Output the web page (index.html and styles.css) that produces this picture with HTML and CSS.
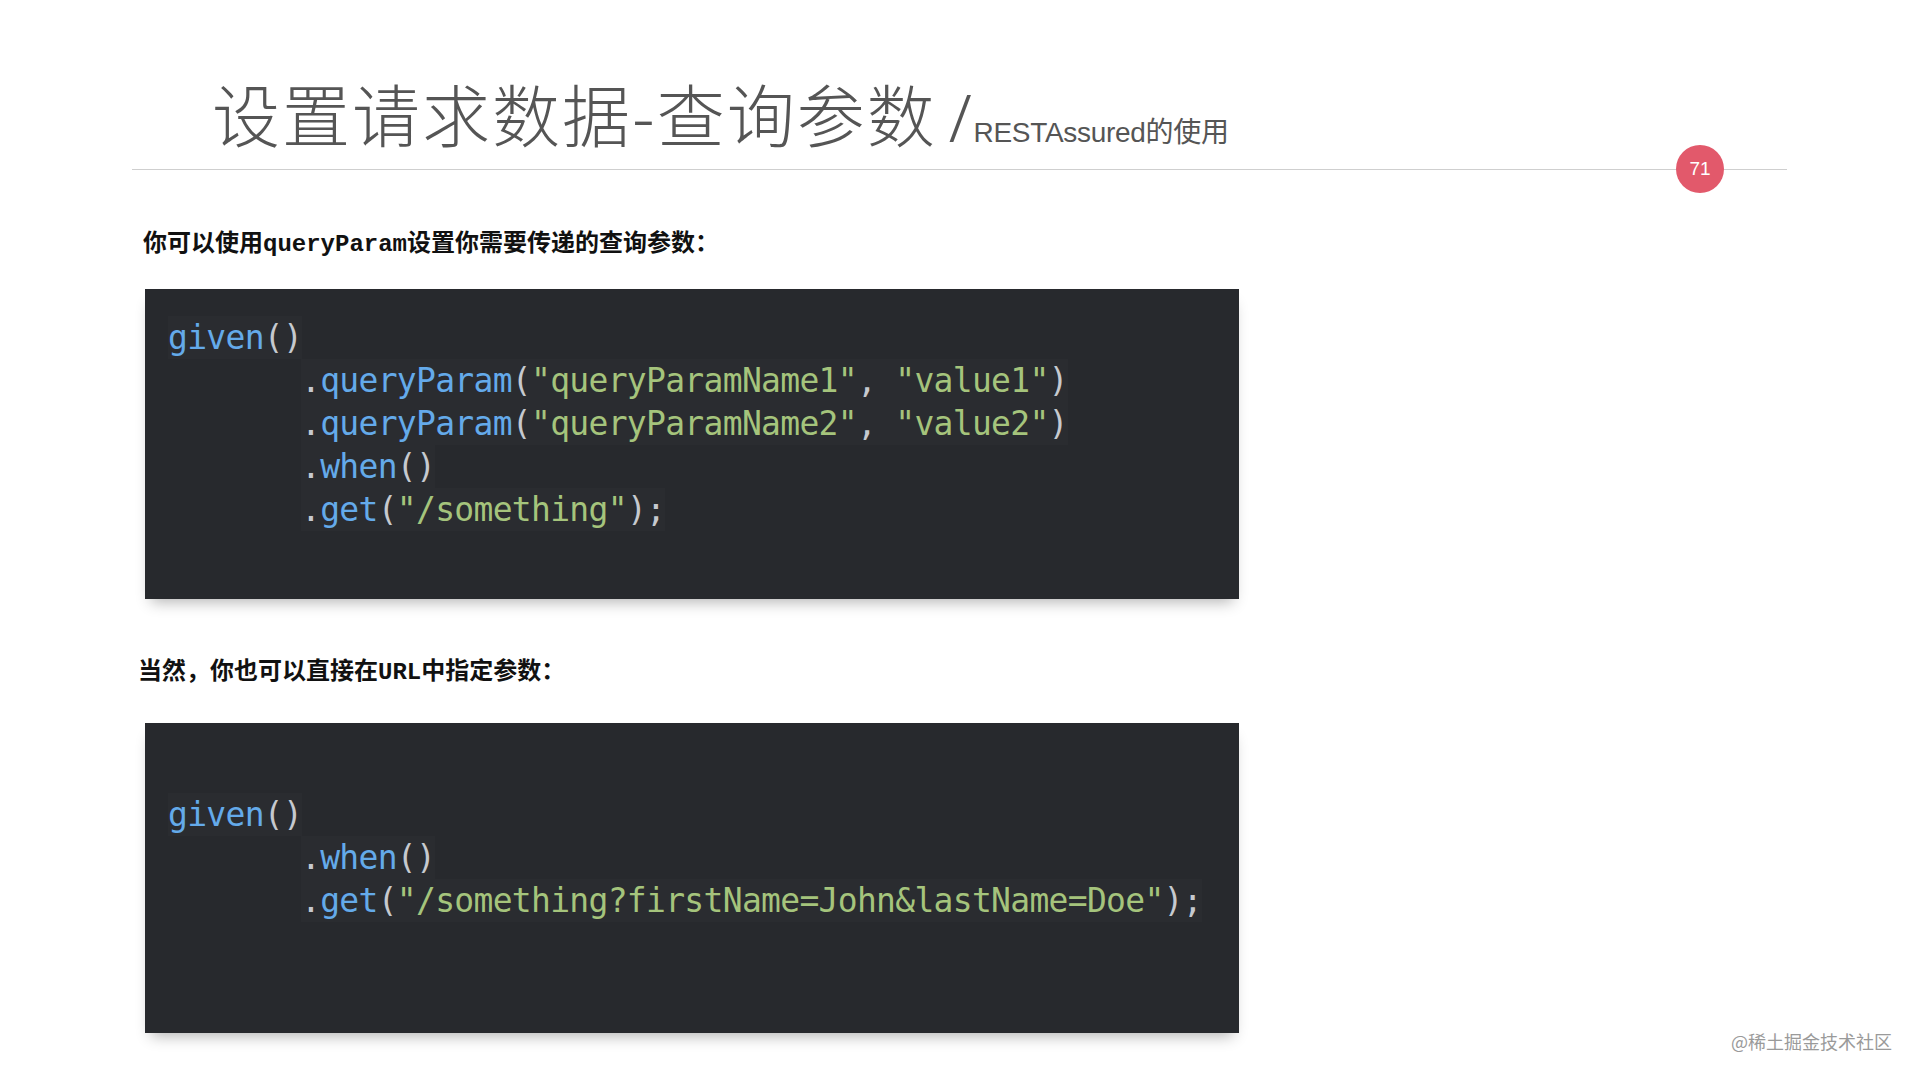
FILE: index.html
```html
<!DOCTYPE html>
<html lang="zh">
<head>
<meta charset="utf-8">
<title>设置请求数据-查询参数</title>
<link rel="stylesheet" href="styles.css">
</head>
<body>
<div class="slide">
  <header class="header">
    <h1 class="title">设置请求数据-查询参数</h1>
    <span class="slash">/</span>
    <span class="subtitle">RESTAssured的使用</span>
  </header>
  <div class="rule"><span class="badge">71</span></div>

  <main class="content">
    <p class="desc desc-1">你可以使用<code class="kw">queryParam</code>设置你需要传递的查询参数：</p>
    <pre class="code code-1"><span class="ln"><span class="fn">given</span><span class="pn">()</span></span>
<span class="ln ind"><span class="pn">.</span><span class="fn">queryParam</span><span class="pn">(</span><span class="st">"queryParamName1"</span><span class="pn">, </span><span class="st">"value1"</span><span class="pn">)</span></span>
<span class="ln ind"><span class="pn">.</span><span class="fn">queryParam</span><span class="pn">(</span><span class="st">"queryParamName2"</span><span class="pn">, </span><span class="st">"value2"</span><span class="pn">)</span></span>
<span class="ln ind"><span class="pn">.</span><span class="fn">when</span><span class="pn">()</span></span>
<span class="ln ind"><span class="pn">.</span><span class="fn">get</span><span class="pn">(</span><span class="st">"/something"</span><span class="pn">);</span></span></pre>

    <p class="desc desc-2">当然，你也可以直接在<code class="kw">URL</code>中指定参数：</p>
    <pre class="code code-2"><span class="ln"><span class="fn">given</span><span class="pn">()</span></span>
<span class="ln ind"><span class="pn">.</span><span class="fn">when</span><span class="pn">()</span></span>
<span class="ln ind"><span class="pn">.</span><span class="fn">get</span><span class="pn">(</span><span class="st">"/something?firstName=John&amp;lastName=Doe"</span><span class="pn">);</span></span></pre>
  </main>

  <div class="watermark">@稀土掘金技术社区</div>
</div>
</body>
</html>
```

FILE: styles.css
```css
html, body {
  margin: 0;
  padding: 0;
  background: #ffffff;
}

.slide {
  position: relative;
  width: 1920px;
  height: 1080px;
  overflow: hidden;
  background: #ffffff;
  font-family: "Noto Sans CJK SC", "Noto Sans", sans-serif;
}

.header {
  display: flex;
  align-items: baseline;
  padding: 79px 0 0 212px;
  height: 90px;
  box-sizing: border-box;
  color: #555555;
}

.title {
  margin: 0;
  font-family: "Noto Sans CJK SC", sans-serif;
  font-weight: 300;
  font-size: 68px;
  line-height: 1;
  letter-spacing: 2px;
  color: #555555;
}

.slash {
  font-family: "Noto Sans", sans-serif;
  font-weight: 300;
  font-size: 66px;
  line-height: 1;
  margin-left: 12px;
  color: #555555;
}

.subtitle {
  font-family: "Liberation Sans", "Noto Sans CJK SC", sans-serif;
  font-size: 28px;
  line-height: 1;
  letter-spacing: -0.3px;
  margin-left: 2px;
  color: #555555;
}

.rule {
  position: relative;
  height: 1px;
  margin: 79px 133px 0 132px;
  background: #cfcfcf;
}

.badge {
  position: absolute;
  left: 1544px;
  top: -24px;
  width: 48px;
  height: 48px;
  border-radius: 50%;
  background: #e2596b;
  color: #ffffff;
  font-family: "Liberation Sans", sans-serif;
  font-size: 19px;
  line-height: 48px;
  text-align: center;
}

.content {
  display: flex;
  flex-direction: column;
  align-items: flex-start;
  padding-left: 145px;
}

.desc {
  margin: 0;
  font-family: "Noto Sans CJK SC", sans-serif;
  font-weight: 700;
  font-size: 24px;
  line-height: 32px;
  height: 32px;
  color: #111111;
}

.desc-1 {
  margin-top: 55px;
  margin-left: -2px;
}

.desc-2 {
  margin-top: 54px;
  margin-left: -7px;
}

.kw {
  font-family: "Liberation Mono", monospace;
  font-weight: 700;
  font-size: 24px;
  line-height: 32px;
}

.code {
  margin: 0;
  width: 1094px;
  height: 310px;
  box-sizing: border-box;
  padding-left: 23px;
  background: #27292d;
  font-family: "DejaVu Sans Mono", monospace;
  font-size: 33px;
  line-height: 43px;
  letter-spacing: -0.7px;
  color: #c9ccd2;
  box-shadow: 0 9px 14px -6px rgba(0, 0, 0, 0.3);
}

.code-1 {
  margin-top: 32px;
  padding-top: 27px;
}

.code-2 {
  margin-top: 38px;
  padding-top: 70px;
}

.ln {
  display: inline-block;
  background: rgba(255, 255, 255, 0.015);
}

.ind {
  margin-left: 133px;
}

.fn {
  color: #64aaea;
}

.st {
  color: #a5c47c;
}

.pn {
  color: #c6c9cf;
}

.watermark {
  position: absolute;
  right: 28px;
  bottom: 27px;
  font-family: "Noto Sans CJK SC", sans-serif;
  font-size: 18px;
  line-height: 24px;
  color: #9a9a9a;
  text-shadow: 0 0 2px #ffffff;
}
```
